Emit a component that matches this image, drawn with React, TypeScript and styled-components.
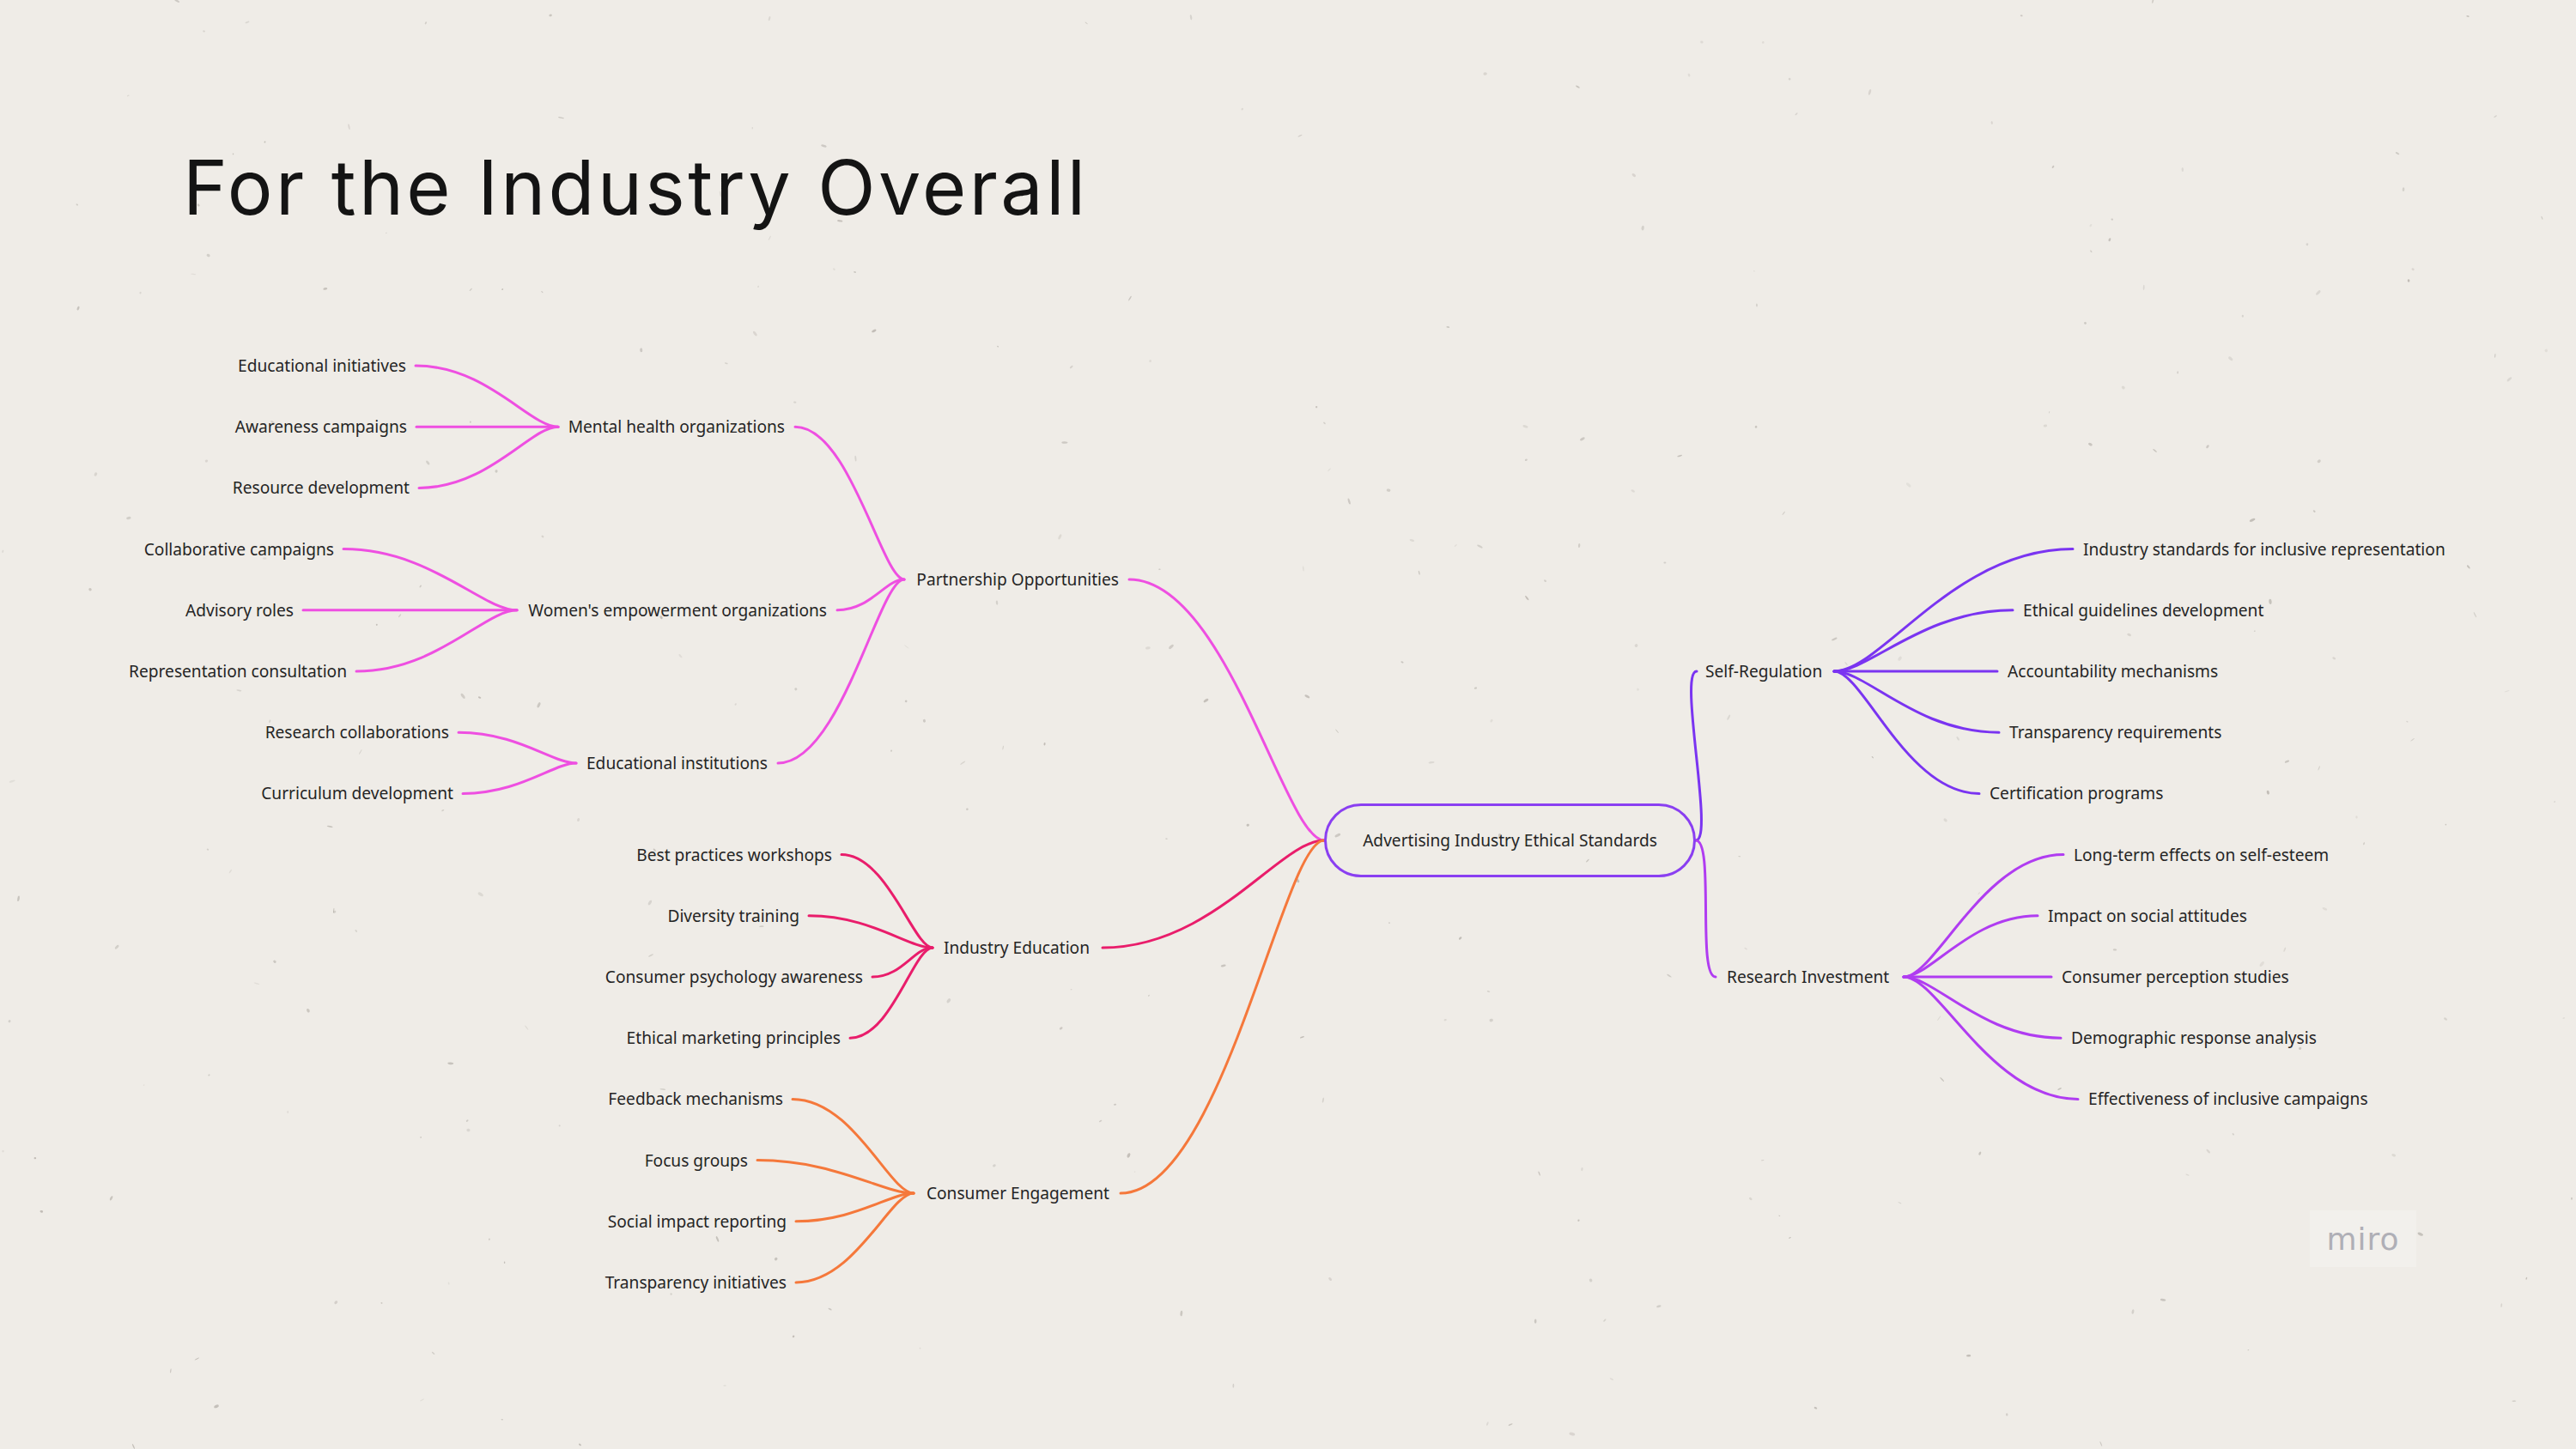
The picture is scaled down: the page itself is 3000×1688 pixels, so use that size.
import React from 'react';
import styled, { createGlobalStyle } from 'styled-components';

const GlobalStyle = createGlobalStyle`
  html, body {
    margin: 0;
    padding: 0;
  }
  body {
    background: #eeebe6;
    font-family: "Noto Sans", "Open Sans", sans-serif;
  }
`;

const PINK = '#ee4fe1';
const CRIMSON = '#e91d6b';
const ORANGE = '#f5783b';
const VIOLET = '#7a34f1';
const PURPLE = '#b03cf1';

const ROW0 = 426;
const PITCH = 71.2;
const row = (i: number) => ROW0 + PITCH * i;

type Leaf = { label: string; x: number; y: number };
type Branch = {
  label: string;
  x: number; // text edge facing the parent
  y: number;
  inX: number; // where the wire to the parent ends
  outX: number; // where the children wires meet
  color: string;
  leaves?: Leaf[];
  groups?: Branch[];
};

// left side: x is the right edge of the text
const left: Branch[] = [
  {
    label: 'Partnership Opportunities', x: 1303, y: 675, inX: 1315, outX: 1053, color: PINK,
    groups: [
      {
        label: 'Mental health organizations', x: 914, y: row(1), inX: 926, outX: 650, color: PINK,
        leaves: [
          { label: 'Educational initiatives', x: 473, y: row(0) },
          { label: 'Awareness campaigns', x: 474, y: row(1) },
          { label: 'Resource development', x: 477, y: row(2) },
        ],
      },
      {
        label: "Women's empowerment organizations", x: 963, y: row(4), inX: 975, outX: 602, color: PINK,
        leaves: [
          { label: 'Collaborative campaigns', x: 389, y: row(3) },
          { label: 'Advisory roles', x: 342, y: row(4) },
          { label: 'Representation consultation', x: 404, y: row(5) },
        ],
      },
      {
        label: 'Educational institutions', x: 894, y: 889, inX: 906, outX: 671, color: PINK,
        leaves: [
          { label: 'Research collaborations', x: 523, y: row(6) },
          { label: 'Curriculum development', x: 528, y: row(7) },
        ],
      },
    ],
  },
  {
    label: 'Industry Education', x: 1269, y: 1104, inX: 1284, outX: 1086, color: CRIMSON,
    leaves: [
      { label: 'Best practices workshops', x: 969, y: row(8) },
      { label: 'Diversity training', x: 931, y: row(9) },
      { label: 'Consumer psychology awareness', x: 1005, y: row(10) },
      { label: 'Ethical marketing principles', x: 979, y: row(11) },
    ],
  },
  {
    label: 'Consumer Engagement', x: 1292, y: 1390, inX: 1305, outX: 1064, color: ORANGE,
    leaves: [
      { label: 'Feedback mechanisms', x: 912, y: row(12) },
      { label: 'Focus groups', x: 871, y: row(13) },
      { label: 'Social impact reporting', x: 916, y: row(14) },
      { label: 'Transparency initiatives', x: 916, y: row(15) },
    ],
  },
];

// right side: x is the left edge of the text
const right: Branch[] = [
  {
    label: 'Self-Regulation', x: 1986, y: row(5), inX: 1976, outX: 2136, color: VIOLET,
    leaves: [
      { label: 'Industry standards for inclusive representation', x: 2426, y: row(3) },
      { label: 'Ethical guidelines development', x: 2356, y: row(4) },
      { label: 'Accountability mechanisms', x: 2338, y: row(5) },
      { label: 'Transparency requirements', x: 2340, y: row(6) },
      { label: 'Certification programs', x: 2317, y: row(7) },
    ],
  },
  {
    label: 'Research Investment', x: 2011, y: row(10), inX: 1998, outX: 2217, color: PURPLE,
    leaves: [
      { label: 'Long-term effects on self-esteem', x: 2415, y: row(8) },
      { label: 'Impact on social attitudes', x: 2385, y: row(9) },
      { label: 'Consumer perception studies', x: 2401, y: row(10) },
      { label: 'Demographic response analysis', x: 2412, y: row(11) },
      { label: 'Effectiveness of inclusive campaigns', x: 2432, y: row(12) },
    ],
  },
];

const ROOT = { left: 1542, right: 1975, top: 936, height: 86, y: 979 };

const wire = (x0: number, y0: number, x3: number, y3: number) => {
  const dx = x3 - x0;
  const dir = Math.sign(dx) || 1;
  const a = Math.max(Math.abs(dx) * 0.2, 22) * dir;
  const b = Math.max(Math.abs(dx) * 0.5, 22) * dir;
  return `M${x0} ${y0} C${x0 + a} ${y0} ${x3 - b} ${y3} ${x3} ${y3}`;
};

type Wire = { d: string; color: string };

const collectWires = (branches: Branch[], side: 'left' | 'right', fromX: number, fromY: number): Wire[] => {
  const out: Wire[] = [];
  const gap = side === 'left' ? 11 : -12;
  branches.forEach((b) => {
    out.push({ d: wire(fromX, fromY, b.inX, b.y), color: b.color });
    b.leaves?.forEach((l) => out.push({ d: wire(b.outX, b.y, l.x + gap, l.y), color: b.color }));
    if (b.groups) out.push(...collectWires(b.groups, side, b.outX, b.y));
  });
  return out;
};

const wires: Wire[] = [
  ...collectWires(left, 'left', ROOT.left, ROOT.y),
  ...collectWires(right, 'right', ROOT.right, ROOT.y),
];

const flatten = (branches: Branch[]): Leaf[] =>
  branches.flatMap((b) => [
    { label: b.label, x: b.x, y: b.y },
    ...(b.leaves ?? []),
    ...flatten(b.groups ?? []),
  ]);

// paper specks
const specks = (() => {
  let s = 917;
  const rnd = () => {
    s = (s * 16807) % 2147483647;
    return s / 2147483647;
  };
  return Array.from({ length: 320 }, () => ({
    x: rnd() * 3000,
    y: rnd() * 1688,
    rx: 0.8 + rnd() * 2.8,
    ry: 0.5 + rnd() * 1.3,
    r: rnd() * 180,
    o: 0.1 + rnd() * 0.3,
  }));
})();

const Board = styled.div`
  position: relative;
  width: 3000px;
  height: 1688px;
  overflow: hidden;
  background: #efece7;
`;

const Paper = styled.svg`
  position: absolute;
  inset: 0;
  pointer-events: none;
`;

const Title = styled.h1`
  position: relative;
  margin: 0;
  padding: 174px 0 0 213px;
  font-family: Inter, "Noto Sans", sans-serif;
  font-weight: 400;
  font-size: 88px;
  line-height: 1;
  letter-spacing: 3.4px;
  color: #141414;
`;

const Map = styled.div`
  position: absolute;
  inset: 0;
`;

const Wires = styled.svg`
  position: absolute;
  inset: 0;
  overflow: visible;
`;

const Topic = styled.div<{ $side: 'left' | 'right' }>`
  position: absolute;
  transform: translate(${(p) => (p.$side === 'left' ? '-100%' : '0')}, -50%);
  font-size: 19.15px;
  line-height: 1.3;
  white-space: nowrap;
  color: #252525;
`;

const RootTopic = styled.div`
  position: absolute;
  box-sizing: border-box;
  display: flex;
  align-items: center;
  justify-content: center;
  border: 3px solid #8a3ff1;
  border-radius: 43px;
  font-size: 19.15px;
  color: #252525;
  white-space: nowrap;
`;

const Watermark = styled.div`
  position: absolute;
  right: 186px;
  bottom: 212px;
  width: 124px;
  height: 66px;
  display: flex;
  align-items: center;
  justify-content: center;
  background: rgba(250, 249, 247, 0.3);
  font-family: "DejaVu Sans", sans-serif;
  font-size: 36px;
  letter-spacing: 1px;
  color: #afafb6;
`;

export default function App() {
  const leftTopics = flatten(left);
  const rightTopics = flatten(right);
  return (
    <Board>
      <GlobalStyle />
      <Paper width={3000} height={1688}>
        {specks.map((k, i) => (
          <ellipse
            key={i}
            cx={k.x}
            cy={k.y}
            rx={k.rx}
            ry={k.ry}
            fill="#7d776f"
            opacity={k.o}
            transform={`rotate(${k.r} ${k.x} ${k.y})`}
          />
        ))}
      </Paper>
      <Title>For the Industry Overall</Title>
      <Map>
        <Wires width={3000} height={1688}>
          {wires.map((w, i) => (
            <path key={i} d={w.d} fill="none" stroke={w.color} strokeWidth={3} strokeLinecap="round" />
          ))}
        </Wires>
        <RootTopic
          style={{ left: ROOT.left, top: ROOT.top, width: ROOT.right - ROOT.left, height: ROOT.height }}
        >
          Advertising Industry Ethical Standards
        </RootTopic>
        {leftTopics.map((t) => (
          <Topic key={t.label} $side="left" style={{ left: t.x, top: t.y }}>
            {t.label}
          </Topic>
        ))}
        {rightTopics.map((t) => (
          <Topic key={t.label} $side="right" style={{ left: t.x, top: t.y }}>
            {t.label}
          </Topic>
        ))}
      </Map>
      <Watermark>miro</Watermark>
    </Board>
  );
}
